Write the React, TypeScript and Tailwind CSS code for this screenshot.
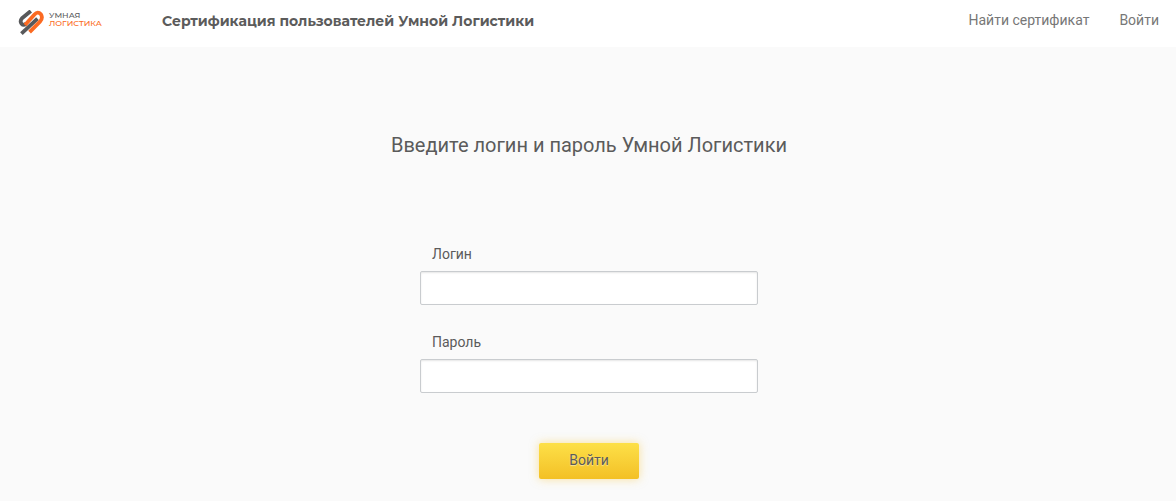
import { useState } from 'react';
import type { FormEvent } from 'react';

function Logo() {
  return (
    <a href="#" className="mt-0.5 flex w-36 shrink-0 items-start gap-[5px]" aria-label="Умная Логистика">
      <svg viewBox="18 10 26 26" className="size-[26px]" fill="none" strokeWidth="3.8" strokeLinejoin="round">
        <path d="M30.8 11 L22 18.3 Q19.6 21 21.5 23.7 Q23.5 25.9 26 23.8" stroke="#58595b" />
        <path d="M21.4 33.6 L37.5 18.6" stroke="#58595b" />
        <path d="M25 25 L34.5 14.4 Q37.8 10.8 40.9 14.2 Q43.2 17.8 40.2 21.4 L29.6 32.2" stroke="#fb6a22" />
      </svg>
      <span className="flex flex-col pt-px font-['Montserrat','Inter',sans-serif] text-[8px] leading-[8px] font-medium">
        <span className="text-[#58595b]">УМНАЯ</span>
        <span className="text-[#fb6a22]">ЛОГИСТИКА</span>
      </span>
    </a>
  );
}

type FieldProps = {
  id: string;
  label: string;
  type: string;
  value: string;
  onChange: (value: string) => void;
};

function Field({ id, label, type, value, onChange }: FieldProps) {
  return (
    <div className="flex flex-col gap-2">
      <label htmlFor={id} className="px-3 text-sm leading-[18px]">
        {label}
      </label>
      <input
        id={id}
        type={type}
        value={value}
        onChange={(e) => onChange(e.target.value)}
        className="h-[34px] w-full rounded-xs border border-[#c9cccf] bg-white px-3 text-sm shadow-[inset_0_1px_2px_rgba(0,0,0,0.1)] outline-none focus:border-[#f3c32a]"
      />
    </div>
  );
}

export default function App() {
  const [login, setLogin] = useState('');
  const [password, setPassword] = useState('');

  const handleSubmit = (e: FormEvent) => {
    e.preventDefault();
  };

  return (
    <div className="min-h-screen bg-[#fafafa] font-['Roboto',sans-serif] text-[#5b5b5b]">
      <header className="flex h-[47px] items-start justify-between bg-white pt-2 pr-[17px] pl-[18px]">
        <div className="flex items-start">
          <Logo />
          <span className="font-['Montserrat','Inter',sans-serif] text-sm leading-[26px] font-bold">
            Сертификация пользователей Умной Логистики
          </span>
        </div>
        <nav className="flex gap-[30px] pt-0.5 text-sm leading-5 text-[#777777]">
          <a href="#search">Найти сертификат</a>
          <a href="#login">Войти</a>
        </nav>
      </header>

      <main className="flex flex-col items-center pt-[84px] pr-4 pb-[22px] pl-[18px]">
        <h1 className="text-center text-xl leading-7">Введите логин и пароль Умной Логистики</h1>
        <form onSubmit={handleSubmit} className="mt-[86px] flex w-full max-w-[338px] flex-col gap-7">
          <Field id="login" label="Логин" type="text" value={login} onChange={setLogin} />
          <Field id="password" label="Пароль" type="password" value={password} onChange={setPassword} />
          <button
            type="submit"
            className="mt-[22px] h-9 w-[100px] self-center rounded-xs bg-linear-to-b from-[#fde047] to-[#f3c024] pb-0.5 text-sm shadow-[0_0_10px_rgba(250,200,60,0.5)] text-shadow-[0_1px_1px_rgba(255,255,255,0.5)]"
          >
            Войти
          </button>
        </form>
      </main>
    </div>
  );
}
